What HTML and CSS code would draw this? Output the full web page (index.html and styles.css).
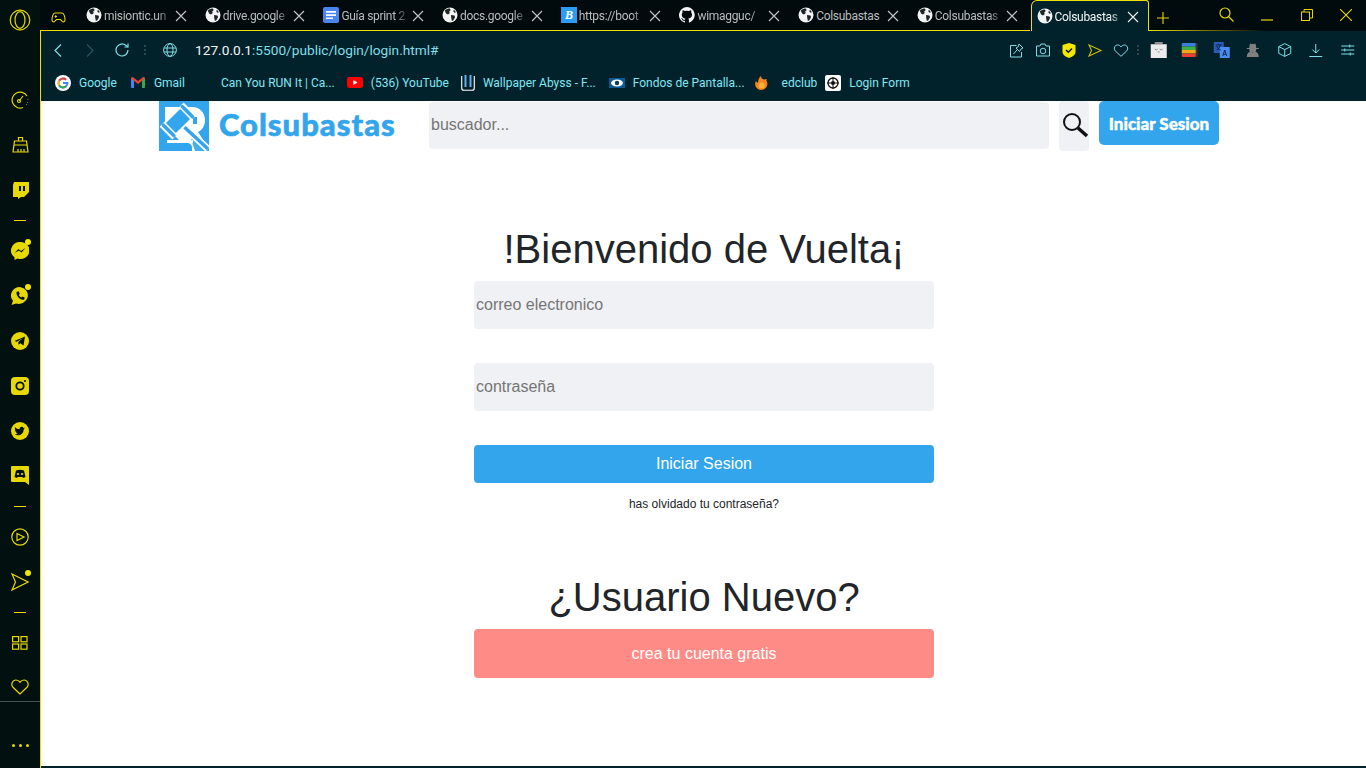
FILE: index.html
```html
<!DOCTYPE html>
<html lang="en">
<head>
  <meta charset="UTF-8">
  <meta name="viewport" content="width=device-width, initial-scale=1.0">
  <title>Colsubastas</title>
  <link rel="stylesheet" href="styles.css">
</head>
<body>
  <svg class="defs" width="0" height="0">
    <symbol id="world" viewBox="0 0 16 16">
      <circle cx="8" cy="8" r="7.5" fill="#f1f3f4"/>
      <path fill="#1d2426" d="M3 3.2c1.400-1 3-1.700 4.700-1.700l1 1.500-1.600 1.700.8 1.300-2 1.500-1.800-.9-1-2.200zM9 8l3.400.5.700 1.500-1.700 3.300-1.500.7-.7-3.300zM12 2.800l2 2.400-1.500.6-1.300-1.500z"/>
    </symbol>
    <symbol id="close" viewBox="0 0 12 12">
      <path d="M1 1l10 10M11 1L1 11" stroke="currentColor" stroke-width="1.100" fill="none"/>
    </symbol>
  </svg>

  <div class="sidebar">
    <div class="side-logo">
      <svg width="22" height="22" viewBox="0 0 22 22" fill="none" stroke="#e6d800" stroke-width="1.200"><circle cx="11" cy="11" r="9.800"/><ellipse cx="11" cy="11" rx="5" ry="8.300"/></svg>
    </div>
    <div class="side-item">
      <svg width="18" height="18" viewBox="0 0 18 18" fill="none" stroke="#e6d800" stroke-width="1.200"><path d="M16 5A8 8 0 1 0 12 16.500"/><path d="M8 10l4-5"/><circle cx="8" cy="10" r="1.500"/><path d="M17 8v.5M16.500 11v.5M15.500 13.500v.5"/></svg>
    </div>
    <div class="side-item">
      <svg width="17" height="17" viewBox="0 0 17 17" fill="none" stroke="#e6d800" stroke-width="1.200"><path d="M6.500 5V1.500h4V5M2.500 5h12l1.500 11H1z"/><path d="M2 9h13M6 16v-3M9 16v-3M12 16v-3"/></svg>
    </div>
    <div class="side-item">
      <svg width="17" height="18" viewBox="0 0 17 18"><path fill="#e6d800" d="M2 1h15v10l-5 5H9l-3 2v-2H1V4z"/><path fill="#02100f" d="M7 5h2v5H7zM11 5h2v5h-2z"/></svg>
    </div>
    <div class="side-dash"></div>
    <div class="side-item has-dot">
      <svg width="18" height="18" viewBox="0 0 18 18"><path fill="#e6d800" d="M9 0a9 8.500 0 0 0-5.500 15.200V18l3-1.500A9 8.500 0 1 0 9 0z"/><path fill="#02100f" d="M3.500 11l4-4 2.500 2 4.500-3-4 4.500-2.500-2z"/></svg>
    </div>
    <div class="side-item has-dot">
      <svg width="18" height="18" viewBox="0 0 18 18"><path fill="#e6d800" d="M9 0a9 8.500 0 0 0-7 13.800L.5 18l4.500-1.500A9 8.500 0 1 0 9 0z"/><path fill="#02100f" d="M5.500 5l2-.8 1.300 2.500-1 1.200a6 6 0 0 0 2.500 2.500l1.200-1 2.300 1.400-.8 2c-3.500.4-8-3.500-7.500-7.800z"/></svg>
    </div>
    <div class="side-item">
      <svg width="18" height="18" viewBox="0 0 18 18"><circle cx="9" cy="9" r="9" fill="#e6d800"/><path fill="#02100f" d="M3.500 9L14 4.500l-1.500 9-3.200-2.300-1.700 1.600-.3-2.800L12 6 5.800 9.800z"/></svg>
    </div>
    <div class="side-item">
      <svg width="18" height="18" viewBox="0 0 18 18"><rect width="18" height="18" rx="4" fill="#e6d800"/><circle cx="9" cy="9" r="3.700" fill="none" stroke="#02100f" stroke-width="1.800"/><circle cx="14" cy="4" r="1" fill="#02100f"/></svg>
    </div>
    <div class="side-item">
      <svg width="18" height="18" viewBox="0 0 18 18"><circle cx="9" cy="9" r="9" fill="#e6d800"/><path fill="#02100f" d="M3.500 12.500c3 1.800 9 1 9.300-5.500l1.200-1.300-1.400.3c-1-2-4.500-1.500-4 1.300-2 0-3.500-1-4.500-2.300-.6 1.300-.2 2.500.8 3.300l-.9-.2c0 1.200.8 2 1.900 2.400h-1c.4.800 1.100 1.200 2 1.300-1 .6-2.200.8-3.400.7z"/></svg>
    </div>
    <div class="side-item">
      <svg width="18" height="19" viewBox="0 0 18 19"><path fill="#e6d800" d="M1 0h16a1 1 0 0 1 1 1v18l-4-3H1a1 1 0 0 1-1-1V1a1 1 0 0 1 1-1z"/><path fill="#02100f" d="M5 4.500c2.500-1 5.500-1 8 0l1.500 6.500-2.500 1-.8-1.200c-1.400.4-3 .4-4.400 0L6 12l-2.500-1z"/><circle cx="7" cy="8" r="1.100" fill="#e6d800"/><circle cx="11" cy="8" r="1.100" fill="#e6d800"/></svg>
    </div>
    <div class="side-dash"></div>
    <div class="side-item">
      <svg width="18" height="18" viewBox="0 0 18 18" fill="none" stroke="#e6d800" stroke-width="1.200"><circle cx="9" cy="9" r="8.200"/><path d="M6 5.500L13 9l-7 3.500z"/></svg>
    </div>
    <div class="side-item has-dot">
      <svg width="18" height="18" viewBox="0 0 18 18" fill="none" stroke="#e6d800" stroke-width="1.200"><path d="M1 1l16 8L1 17l3.500-8z"/></svg>
    </div>
    <div class="side-dash"></div>
    <div class="side-item">
      <svg width="16" height="14" viewBox="0 0 16 14" fill="none" stroke="#e6d800" stroke-width="1.200"><rect x=".6" y=".6" width="6" height="5.200"/><rect x="9" y=".6" width="6" height="5.200"/><rect x=".6" y="8" width="6" height="5.200"/><rect x="9" y="8" width="6" height="5.200"/></svg>
    </div>
    <div class="side-item side-fav">
      <svg width="18" height="16" viewBox="0 0 18 16" fill="none" stroke="#e6d800" stroke-width="1.200"><path d="M9 15L2 8.300C-.5 5.500 1.500 1 5 1c2 0 3.200 1 4 2.300C9.800 2 11 1 13 1c3.500 0 5.500 4.500 3 7.300z"/></svg>
    </div>
    <div class="side-more"><span></span><span></span><span></span></div>
  </div>

  <div class="window">
    <div class="tabstrip">
      <div class="games">
        <svg width="15" height="11" viewBox="0 0 15 11" fill="none" stroke="#e6d800" stroke-width="1.100"><path d="M4 1h7c2 0 3 4 3 7 0 2-2 2.500-3 1L9.500 7.500h-4L4 9C3 10.500 1 10 1 8c0-3 1-7 3-7z"/><path d="M3.500 4.500h2.500M4.700 3.300v2.400"/></svg>
      </div>
      <div class="tab"><svg class="fav"><use href="#world"/></svg><span class="tab-title">misiontic.un</span><svg class="tab-x"><use href="#close"/></svg></div>
      <div class="tab"><svg class="fav"><use href="#world"/></svg><span class="tab-title">drive.google</span><svg class="tab-x"><use href="#close"/></svg></div>
      <div class="tab">
        <svg class="fav" viewBox="0 0 16 16"><rect width="16" height="16" rx="2" fill="#4a86f0"/><path fill="#fff" d="M3 4h10v1.700H3zM3 7.200h10v1.700H3zM3 10.400h7v1.700H3z"/></svg>
        <span class="tab-title">Guía sprint 2</span><svg class="tab-x"><use href="#close"/></svg>
      </div>
      <div class="tab"><svg class="fav"><use href="#world"/></svg><span class="tab-title">docs.google</span><svg class="tab-x"><use href="#close"/></svg></div>
      <div class="tab">
        <span class="fav fav-boot">B</span>
        <span class="tab-title">https://boot</span><svg class="tab-x"><use href="#close"/></svg>
      </div>
      <div class="tab">
        <svg class="fav" viewBox="0 0 16 16"><path fill="#f1f3f4" d="M8 0a8 8 0 0 0-2.500 15.600c.4.100.5-.2.500-.4v-1.400c-2.200.5-2.700-1-2.700-1-.4-.9-.9-1.200-.9-1.200-.7-.5.100-.5.100-.5.800.1 1.200.8 1.200.8.700 1.200 1.900.9 2.300.7.100-.5.300-.9.500-1.100-1.800-.2-3.700-.9-3.700-4 0-.9.300-1.600.8-2.100-.1-.2-.4-1 .1-2.100 0 0 .7-.2 2.200.8a7.600 7.600 0 0 1 4 0c1.500-1 2.200-.8 2.200-.8.400 1.100.2 1.900.1 2.100.5.600.8 1.300.8 2.100 0 3.100-1.900 3.700-3.700 3.900.3.300.6.800.6 1.500v2.200c0 .2.100.5.600.4A8 8 0 0 0 8 0z"/></svg>
        <span class="tab-title">wimagguc/</span><svg class="tab-x"><use href="#close"/></svg>
      </div>
      <div class="tab"><svg class="fav"><use href="#world"/></svg><span class="tab-title tab-full">Colsubastas</span><svg class="tab-x"><use href="#close"/></svg></div>
      <div class="tab"><svg class="fav"><use href="#world"/></svg><span class="tab-title">Colsubastas</span><svg class="tab-x"><use href="#close"/></svg></div>
      <div class="tab tab-active"><svg class="fav"><use href="#world"/></svg><span class="tab-title">Colsubastas</span><svg class="tab-x"><use href="#close"/></svg></div>
      <div class="new-tab">
        <svg width="12" height="12" viewBox="0 0 12 12" stroke="#e6d800" stroke-width="1.100"><path d="M6 0v12M0 6h12"/></svg>
      </div>
      <div class="win-btns">
        <svg class="win-search" width="15" height="15" viewBox="0 0 15 15" fill="none" stroke="#e6d800" stroke-width="1.200"><circle cx="6" cy="6" r="5"/><path d="M9.500 9.500L14.500 14.500"/></svg>
        <svg width="12" height="12" viewBox="0 0 12 12" stroke="#e6d800" stroke-width="1.200"><path d="M0 11h12"/></svg>
        <svg width="12" height="12" viewBox="0 0 12 12" fill="none" stroke="#e6d800" stroke-width="1"><rect x=".5" y="3" width="8" height="8.500"/><path d="M3 3V.5h8.500V9H8.500"/></svg>
        <svg width="12" height="12" viewBox="0 0 12 12" stroke="#e6d800" stroke-width="1.100"><path d="M0 0l12 12M12 0L0 12"/></svg>
      </div>
    </div>

    <div class="browser">
      <div class="toolbar">
        <svg class="nav-ic" width="8" height="13" viewBox="0 0 8 13" fill="none" stroke="#7fdfe8" stroke-width="1.200"><path d="M7 .5L1 6.500l6 6"/></svg>
        <svg class="nav-ic" width="8" height="13" viewBox="0 0 8 13" fill="none" stroke="#27545c" stroke-width="1.200"><path d="M1 .5l6 6-6 6"/></svg>
        <svg class="nav-ic nav-reload" width="14" height="14" viewBox="0 0 14 14" fill="none" stroke="#7fdfe8" stroke-width="1.200"><path d="M13 7a6 6 0 1 1-2-4.500L13 4"/><path d="M13 .5V4H9.500"/></svg>
        <span class="tb-dots"></span>
        <svg class="globe" width="14" height="14" viewBox="0 0 14 14" fill="none" stroke="#7fdfe8" stroke-width="1"><circle cx="7" cy="7" r="6.400"/><ellipse cx="7" cy="7" rx="3" ry="6.400"/><path d="M1 5h12M1 9h12"/></svg>
        <div class="url">127.0.0.1<span>:5500/public/login/login.html#</span></div>
        <div class="tools">
          <svg class="tool" width="15" height="15" viewBox="0 0 15 15" fill="none" stroke="#7fdfe8" stroke-width="1"><path d="M7 2.500H1v11.500h11V9"/><path d="M9.500 1l4 4-2 1-1.500 2.500L6.500 5 9 3.500zM7.500 7L4 11"/></svg>
          <svg class="tool" width="15" height="14" viewBox="0 0 15 14" fill="none" stroke="#7fdfe8" stroke-width="1"><path d="M1 3h3.500l1-2h4l1 2H14v10H1z"/><circle cx="7.500" cy="8" r="2.800"/></svg>
          <svg class="tool" width="13" height="15" viewBox="0 0 13 15"><path fill="#f5e800" d="M6.500 0L13 2v7c0 3-3.500 5-6.500 6C3.500 14 0 12 0 9V2z"/><path d="M3.500 7l2.300 2.300L9.500 5.500" fill="none" stroke="#111" stroke-width="1.500"/></svg>
          <svg class="tool" width="14" height="13" viewBox="0 0 14 13" fill="none" stroke="#c8bd00" stroke-width="1.100"><path d="M1 1l12 5.500L1 12l2.500-5.500z"/></svg>
          <svg class="tool" width="15" height="13" viewBox="0 0 15 13" fill="none" stroke="#7fdfe8" stroke-width="1"><path d="M7.500 12.300L1.700 6.800C-.3 4.500 1.300 1 4.200 1c1.500 0 2.600.8 3.300 2 .7-1.200 1.800-2 3.300-2 2.900 0 4.500 3.500 2.500 5.800z"/></svg>
          <span class="tb-dots tb-dots-r"></span>
          <svg class="ext" width="16" height="16" viewBox="0 0 16 16"><path fill="#8d8d8d" d="M4 0h8v2h4v1H0V2h4z"/><rect y="2.500" width="16" height="13.500" fill="#ececec"/><path d="M4 7l1.500 1L7 7M9 7l1.500 1L12 7M7 10h2" fill="none" stroke="#777" stroke-width=".8"/></svg>
          <svg class="ext" width="16" height="14" viewBox="0 0 16 14"><rect x="14" width="2" height="14" fill="#333"/><rect width="14" height="3.500" rx="1" fill="#3a7fe0"/><rect y="3.500" width="14" height="3.500" fill="#3fae49"/><rect y="7" width="14" height="3.500" fill="#f4a91c"/><rect y="10.500" width="14" height="3.500" rx="1" fill="#e5432f"/></svg>
          <svg class="ext" width="16" height="16" viewBox="0 0 16 16"><rect width="10" height="11" fill="#2a5bb5"/><rect x="6" y="5" width="10" height="11" fill="#4a8df0"/><path d="M2 3h6M5 2v1M3 8c2-1 3-3 3.500-5M3 4c.5 2 2 3.500 4 4" fill="none" stroke="#0c1f44" stroke-width=".9"/><path d="M9 14l2-6 2 6M9.800 12.300h2.400" fill="none" stroke="#10264e" stroke-width="1"/></svg>
          <svg class="ext" width="14" height="14" viewBox="0 0 14 14"><path fill="#808080" d="M3.500 5c0-1 .5-4 1-4.500 1 .5 1.500.5 2.500.5S8.500 1 9.500.5c.5.5 1 3.500 1 4.500H13v1h-2.500a3.500 3.500 0 0 1-7 0H1V5zM1 14c0-3 1.500-5 3.500-5.500L7 10l2.500-1.500C11.500 9 13 11 13 14z"/></svg>
          <svg class="tool-b" width="14" height="14" viewBox="0 0 14 14" fill="none" stroke="#7fdfe8" stroke-width="1"><path d="M7 .6l6 3v6.800l-6 3-6-3V3.600zM1 3.600l6 3 6-3M7 6.600v6.800"/></svg>
          <svg class="tool-b" width="14" height="13" viewBox="0 0 14 13" fill="none" stroke="#7fdfe8" stroke-width="1"><path d="M7 0v9M3.500 5.500L7 9l3.500-3.500M.5 12.500h13"/></svg>
          <svg class="tool-b" width="13" height="12" viewBox="0 0 13 12" fill="none" stroke="#7fdfe8" stroke-width="1"><path d="M0 2h13M0 6h13M0 10h13"/><path d="M8.500 .5v3M3.500 4.500v3M9 8.500v3"/></svg>
        </div>
      </div>

      <div class="bookmarks">
        <div class="bm">
          <svg width="16" height="16" viewBox="0 0 16 16"><circle cx="8" cy="8" r="8" fill="#fff"/><path d="M8 8h4.500A4.500 4.500 0 1 1 11 4.700" fill="none" stroke="#4285f4" stroke-width="1.900"/><path d="M11 4.700A4.500 4.500 0 0 0 4.200 5.600" fill="none" stroke="#ea4335" stroke-width="1.900"/><path d="M4.200 5.600a4.500 4.500 0 0 0 0 4.800" fill="none" stroke="#fbbc05" stroke-width="1.900"/><path d="M4.200 10.400a4.500 4.500 0 0 0 6.800.9" fill="none" stroke="#34a853" stroke-width="1.900"/></svg>
          Google
        </div>
        <div class="bm bm-gmail">
          <svg width="14" height="11" viewBox="0 0 14 11"><path fill="#4285f4" d="M0 1.500h3V11H1a1 1 0 0 1-1-1z"/><path fill="#34a853" d="M11 1.500h3V10a1 1 0 0 1-1 1h-2z"/><path fill="#ea4335" d="M0 1.500C0 .3 1.200-.4 2 .3L7 4l5-3.700c.8-.7 2 0 2 1.200L7 7z"/></svg>
          Gmail
        </div>
        <div class="bm bm-nofav">Can You RUN It | Ca...</div>
        <div class="bm bm-nudge">
          <svg width="16" height="11" viewBox="0 0 16 11"><rect width="16" height="11" rx="2.500" fill="#f00"/><path fill="#fff" d="M6.300 3l4.200 2.500-4.200 2.500z"/></svg>
          (536) YouTube
        </div>
        <div class="bm bm-nudge">
          <svg width="14" height="16" viewBox="0 0 14 16" fill="none"><path d="M.7 1v12c0 1.500 1 2.300 2.300 2.300h8c1.300 0 2.300-.8 2.300-2.300V1" stroke="#fff" stroke-width="1.100"/><path d="M4.500 0v12M9.500 0v12" stroke="#5fb0f0" stroke-width="2"/></svg>
          Wallpaper Abyss - F...
        </div>
        <div class="bm">
          <svg width="16" height="10" viewBox="0 0 16 10"><rect width="16" height="10" fill="#0b5a94"/><ellipse cx="8" cy="5" rx="6" ry="3.500" fill="#fff"/><circle cx="8" cy="5" r="2.200" fill="#0b3c5e"/></svg>
          Fondos de Pantalla...
        </div>
        <div class="bm bm-edclub">
          <svg width="16" height="16" viewBox="0 0 16 16"><path fill="#f5831f" d="M3 6c.5 1 1 1.500 2 1.500C5 5 6 2.500 8 1c0 2 1 3 3 3.500L14 4c-1 1-.5 2 0 3 1.500 4-1.500 8-6 8S.5 10 3 6z"/><circle cx="8.500" cy="10.500" r="3" fill="#f9b233"/></svg>
          edclub
        </div>
        <div class="bm bm-login">
          <svg width="16" height="16" viewBox="0 0 16 16"><rect width="16" height="16" rx="2" fill="#fff"/><circle cx="8" cy="8" r="5" fill="none" stroke="#111" stroke-width="1.300"/><path d="M8 2v12M2 8h12" stroke="#111"/><circle cx="8" cy="8" r="2" fill="#111"/></svg>
          Login Form
        </div>
      </div>

      <div class="page">
        <header class="site-head">
          <a class="brand" href="#">
            <svg class="brand-logo" width="50" height="50" viewBox="0 0 50 50">
              <rect width="50" height="50" fill="#33a5ec"/>
              <!-- white R behind the gavel -->
              <path fill="#fff" d="M6 6h27c8 0 13 6 13 13 0 6-3 10-7 12l10 15v4H30L6 24z"/>
              <path fill="#33a5ec" d="M34 16h4v7h-4z"/>
              <path fill="#33a5ec" d="M32 38l6-2 12 14H36z" opacity=".9"/>
              <path d="M22 23l27 25" stroke="#fff" stroke-width="7"/>
              <path d="M22 23l27 25" stroke="#33a5ec" stroke-width="3.500"/>
              <g transform="rotate(45 19 20)">
                <rect x="10" y="3" width="18" height="34" fill="#fff"/>
                <rect x="12" y="10" width="14" height="20" fill="#33a5ec"/>
                <rect x="10" y="5" width="18" height="3.500" rx="1.700" fill="#33a5ec"/>
                <rect x="10" y="31.500" width="18" height="3.500" rx="1.700" fill="#33a5ec"/>
              </g>
              <path fill="#fff" d="M8 39h26v3H8z"/>
              <path fill="#33a5ec" d="M11 50v-3c0-3 2-5 5-5h12c3 0 5 2 5 5v3z"/>
            </svg>
            <span class="brand-name">Colsubastas</span>
          </a>
          <div class="search-box">buscador...</div>
          <button class="search-btn">
            <svg width="28" height="28" viewBox="0 0 28 28" fill="none" stroke="#111"><circle cx="11" cy="11" r="8" stroke-width="2"/><path d="M17 17l9 8" stroke-width="3.400"/></svg>
          </button>
          <button class="head-login">Iniciar Sesion</button>
        </header>

        <main class="login">
          <h1 class="login-title">!Bienvenido de Vuelta¡</h1>
          <div class="field">correo electronico</div>
          <div class="field">contraseña</div>
          <button class="btn-primary">Iniciar Sesion</button>
          <a class="forgot" href="#">has olvidado tu contraseña?</a>
          <h1 class="login-title new-user">¿Usuario Nuevo?</h1>
          <button class="btn-create">crea tu cuenta gratis</button>
        </main>
      </div>
    </div>
  </div>
</body>
</html>
```

FILE: styles.css
```css
* { box-sizing: border-box; }
html, body { height: 100%; }
body { margin: 0; display: flex; height: 768px; overflow: hidden; background: #02100f; font-family: Roboto, sans-serif; }
.defs { position: absolute; }

/* left rail */
.sidebar { width: 40px; flex: none; display: flex; flex-direction: column; background: #02100f; }
.side-logo { height: 40px; display: flex; align-items: center; justify-content: center; margin-bottom: 37px; }
.side-item { position: relative; height: 45px; display: flex; align-items: center; justify-content: center; }
.side-dash { height: 16px; display: flex; align-items: center; justify-content: center; }
.side-dash::before { content: ""; width: 12px; height: 1px; background: #e6d800; }
.has-dot::after { content: ""; position: absolute; top: 11px; right: 9px; width: 6px; height: 6px; border-radius: 50%; background: #f5e800; }
.side-fav { height: 36px; padding-top: 8px; }
.side-more { border-top: 1px solid #4a5152; flex: 1; display: flex; align-items: flex-end; justify-content: center; gap: 4px; padding-bottom: 21px; }
.side-more span { width: 3px; height: 3px; border-radius: 50%; background: #e6d800; }

.window { flex: 1; min-width: 0; display: flex; flex-direction: column; }

/* tabs */
.tabstrip { height: 31px; flex: none; display: flex; position: relative; background: #010a0d; }
.games { width: 40px; padding: 8px 0 0 11px; border-bottom: 1px solid #f0e000; }
.tab { width: 118.7px; height: 31px; display: flex; align-items: flex-start; padding: 7px 0 0 6px; gap: 2px; color: #b9bdbe; font-size: 12px; letter-spacing: -.3px; border-bottom: 1px solid #f0e000; }
.fav { width: 16px; height: 16px; flex: none; }
.fav-boot { background: #2b9cf0; color: #fff; font: italic bold 12px/16px "Liberation Serif", serif; text-align: center; }
.tab-title { flex: 1; min-width: 0; white-space: nowrap; overflow: hidden; line-height: 18px; -webkit-mask-image: linear-gradient(to right, #000 78%, transparent); mask-image: linear-gradient(to right, #000 78%, transparent); }
.tab-full { -webkit-mask-image: none; mask-image: none; }
.tab-x { width: 12px; height: 12px; flex: none; margin: 3px 12px 0 0; color: #c4c8c9; }
.tab-active { width: 118px; margin-left: 1px; background: #02222b; color: #f4f7f7; border: 1px solid #f0e000; border-bottom: none; border-radius: 6px 3px 0 0; padding-left: 5px; }
.tab-active .tab-x { color: #eef2f2; margin-right: 9px; }
.new-tab { width: 28px; padding: 9px 0 0 8px; flex: none; }
.win-btns { flex: 1; display: flex; align-items: flex-start; padding: 9px 14px 0 42px; justify-content: space-between; position: relative; }
.win-btns::after { content: ""; position: absolute; left: -28px; right: 100px; bottom: 0; height: 1px; background: linear-gradient(to right, #f0e000, transparent); }
.win-search { margin-top: -2px; }

.browser { flex: 1; min-height: 0; display: flex; flex-direction: column; background: #02222b; border-left: 1px solid #f0e000; }

/* toolbar */
.toolbar { height: 38px; flex: none; display: flex; align-items: center; padding-left: 13px; color: #7fdfe8; }
.nav-ic { margin-right: 24px; flex: none; }
.nav-reload { margin-left: -3px; }
.tb-dots { width: 2px; height: 10px; flex: none; margin: 0 17px 0 -9px; background: repeating-linear-gradient(to bottom, #2b4950 0 2px, transparent 2px 4px); }
.globe { flex: none; margin-right: 18px; }
.url { font-size: 13.7px; color: #f2f6f6; white-space: nowrap; }
.url span { color: #7fdfe8; }
.tools { margin-left: auto; padding-right: 3px; display: flex; align-items: center; }
.tool { width: 26px; flex: none; }
.tb-dots-r { margin: 0 0 0 3px; }
.ext { width: 31.500px; flex: none; }
.tool-b { width: 31.500px; flex: none; }
.tb-dots-r + .ext { margin-left: 4px; }

/* bookmarks */
.bookmarks { height: 32px; flex: none; display: flex; align-items: center; padding: 0 0 5px 14px; gap: 13px; }
.bm { display: flex; align-items: center; gap: 8px; font-size: 12px; color: #7fe9f5; white-space: nowrap; }
.bm-gmail { margin-left: 1px; gap: 9px; }
.bm-nofav { margin-left: 23px; }
.bm-nudge { margin-left: -1px; }
.bm-edclub { margin-left: -5px; gap: 13px; }
.bm-login { margin-left: -5px; }

/* the page itself */
.page { flex: 1; min-height: 0; background: #fff; margin-bottom: 2px; font-family: "Liberation Sans", sans-serif; }
.site-head { display: flex; align-items: flex-start; padding-left: 118px; }
.brand { display: flex; align-items: center; width: 270px; height: 50px; text-decoration: none; flex: none; }
.brand-logo { flex: none; }
.brand-name { margin: -5px 0 0 10px; font: 900 31px "Lato", sans-serif; letter-spacing: 1px; color: #33a5ec; -webkit-text-stroke: .6px #33a5ec; }
.search-box { width: 620px; height: 47px; margin: 1px 10px 0 0; padding-left: 2px; border-radius: 4px; background: #f0f1f5; color: #757575; font-size: 16px; line-height: 46px; flex: none; }
.search-btn { width: 30px; height: 50px; padding: 0 0 0 1px; border: 0; border-radius: 4px; background: #f0f1f5; flex: none; }
.head-login { width: 120px; height: 44px; margin-left: 10px; border: 0; border-radius: 5px; background: #33a5ec; color: #fff; font: 900 17px "Lato", sans-serif; -webkit-text-stroke: .4px #fff; flex: none; }

.login { width: 460px; margin-left: 433px; display: flex; flex-direction: column; }
.login-title { margin: 72px 0 0; font-size: 40px; font-weight: 400; line-height: 52px; text-align: center; color: #212529; white-space: nowrap; }
.field { height: 48px; margin-top: 34px; padding-left: 2px; border-radius: 4px; background: #f0f1f5; color: #757575; font-size: 16px; line-height: 48px; }
.login-title + .field { margin-top: 6px; }
.btn-primary { height: 38px; margin-top: 34px; border: 0; border-radius: 4px; background: #33a5ec; color: #fff; font: 16px "Liberation Sans", sans-serif; }
.forgot { margin-top: 14px; font-size: 12px; line-height: 14px; text-align: center; color: #212529; text-decoration: none; }
.new-user { margin-top: 60px; }
.btn-create { height: 49px; margin-top: 6px; border: 0; border-radius: 4px; background: #ff8b87; color: #fff; font: 16px "Liberation Sans", sans-serif; }
```
